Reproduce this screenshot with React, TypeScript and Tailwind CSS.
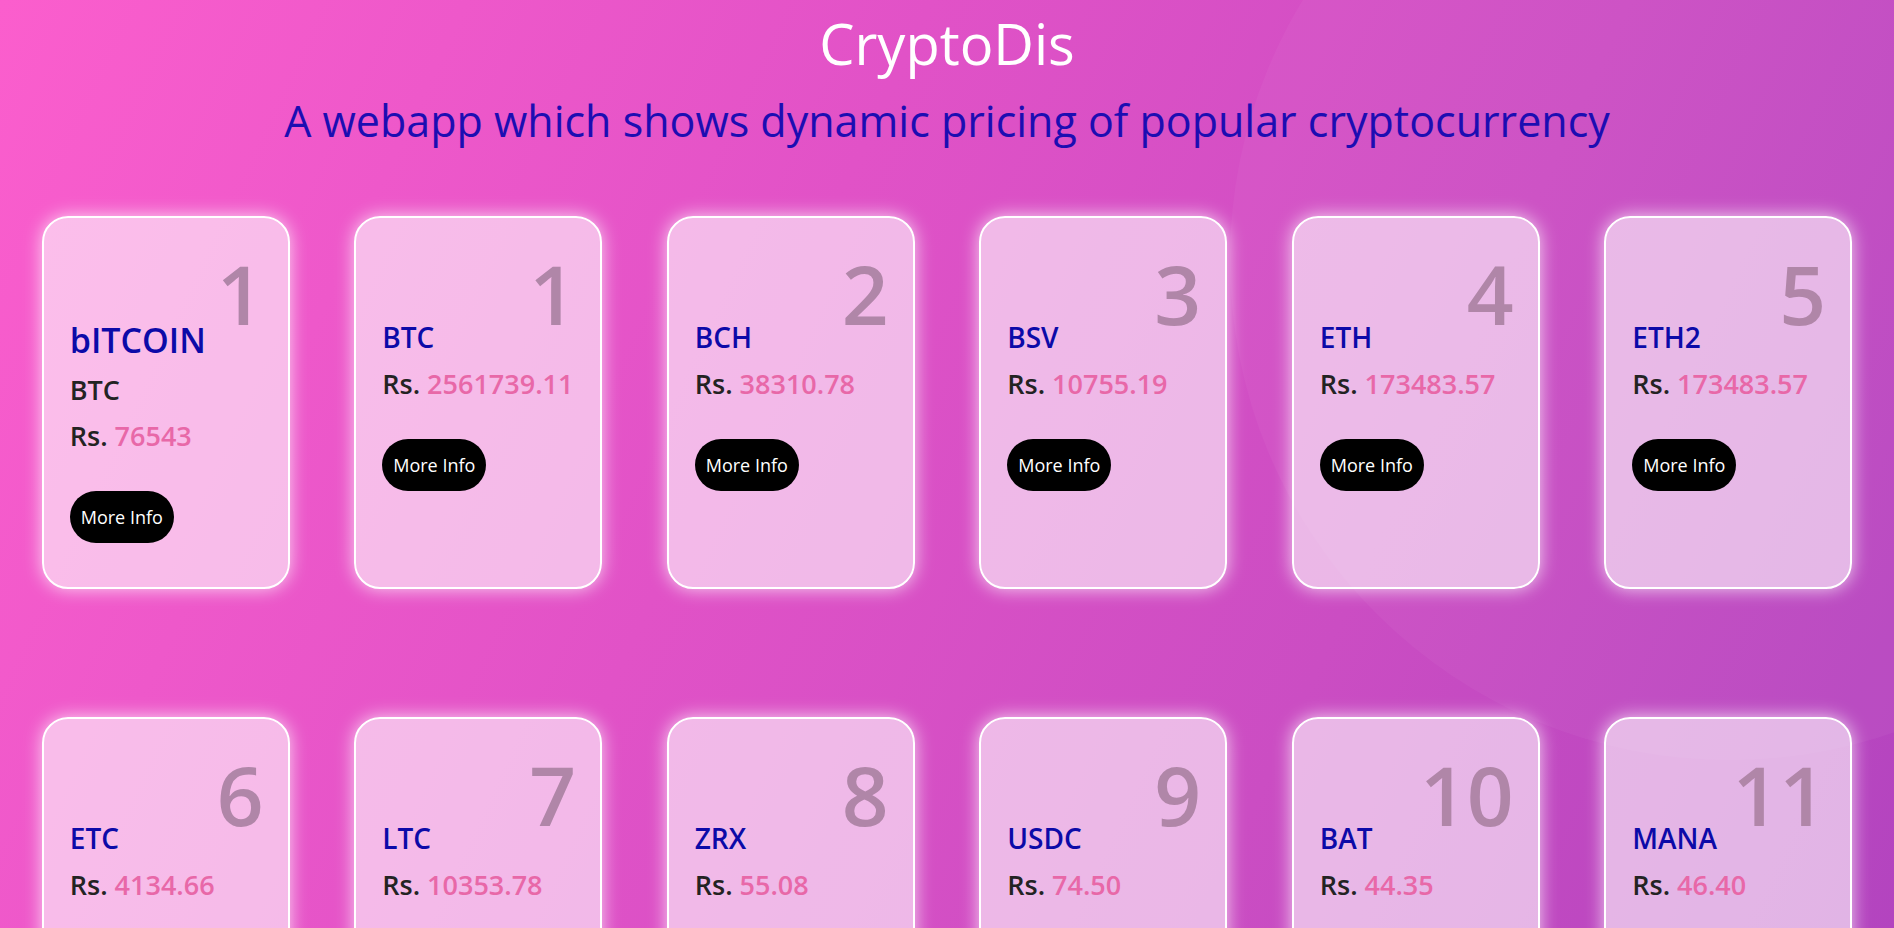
import { FC } from 'react';

type Coin = {
  rank: number;
  name: string;
  symbol?: string;
  price: string;
  big?: boolean;
};

const coins: Coin[] = [
  { rank: 1, name: 'bITCOIN', symbol: 'BTC', price: '76543', big: true },
  { rank: 1, name: 'BTC', price: '2561739.11' },
  { rank: 2, name: 'BCH', price: '38310.78' },
  { rank: 3, name: 'BSV', price: '10755.19' },
  { rank: 4, name: 'ETH', price: '173483.57' },
  { rank: 5, name: 'ETH2', price: '173483.57' },
  { rank: 6, name: 'ETC', price: '4134.66' },
  { rank: 7, name: 'LTC', price: '10353.78' },
  { rank: 8, name: 'ZRX', price: '55.08' },
  { rank: 9, name: 'USDC', price: '74.50' },
  { rank: 10, name: 'BAT', price: '44.35' },
  { rank: 11, name: 'MANA', price: '46.40' },
];

const CoinCard: FC<{ coin: Coin }> = ({ coin }) => (
  <div className="flex h-[373px] w-[248px] flex-col rounded-[26px] border-2 border-white bg-white/60 pl-[26px] pr-[24px] pt-[34px] shadow-[0_0_18px_rgba(255,255,255,0.75)]">
    <div className="h-[71px] text-right text-[82px] font-semibold leading-none text-[#b086a8]">
      {coin.rank}
    </div>
    <h2
      className={
        coin.big
          ? 'text-[34px] font-semibold leading-none text-[#0c0aa8]'
          : 'text-[28px] font-semibold leading-none text-[#0c0aa8]'
      }
    >
      {coin.name}
    </h2>
    {coin.symbol && (
      <div className="mt-[19px] text-[27px] font-semibold leading-none text-[#232323]">
        {coin.symbol}
      </div>
    )}
    <div className="mt-[19px] text-[27px] font-semibold leading-none text-[#232323]">
      Rs. <span className="text-[#e868a8]">{coin.price}</span>
    </div>
    <button className="mt-[42px] h-[52px] self-start rounded-full bg-black px-[11px] text-[18px] text-white">
      More Info
    </button>
  </div>
);

export default function App() {
  return (
    <div className="relative min-h-screen overflow-hidden bg-[linear-gradient(115deg,#fb5ecd_0%,#e152c7_40%,#cb4dc3_70%,#b344bf_100%)] bg-fixed font-['Open_Sans',sans-serif]">
      {/* soft decorative circle top-right */}
      <div className="pointer-events-none absolute left-[1230px] top-[-240px] h-[1000px] w-[1000px] rounded-full bg-white/[0.035]" />

      <div className="relative flex flex-col items-center">
        <h1 className="mt-[15px] text-[56px] font-normal leading-none text-white">CryptoDis</h1>
        <p className="mt-[28px] text-[43px] leading-none text-[#1c0db2]">
          A webapp which shows dynamic pricing of popular cryptocurrency
        </p>

        <div className="mt-[74px] grid grid-cols-[repeat(6,248px)] gap-x-[64.5px] gap-y-[128px] pb-[40px]">
          {coins.map((c, i) => (
            <CoinCard key={i} coin={c} />
          ))}
        </div>
      </div>
    </div>
  );
}
